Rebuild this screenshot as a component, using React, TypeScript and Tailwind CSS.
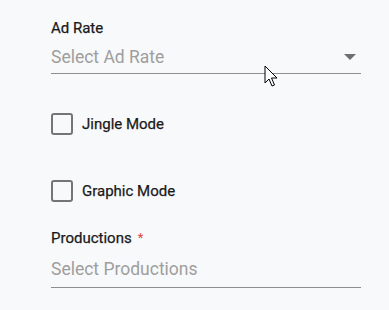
const Checkbox = ({ label }: { label: string }) => (
  <label className="flex items-center">
    <span className="w-[22px] h-[22px] border-2 border-[#757575] rounded-[3px] bg-transparent" />
    <span className="ml-[9px] text-[15px] leading-5 font-normal text-[#1a1a1a] [-webkit-text-stroke:0.25px_#1a1a1a]">{label}</span>
  </label>
);

const App = () => {
  return (
    <div className="relative w-[389px] h-[310px] overflow-hidden bg-[#f8f9fa] font-['Roboto',sans-serif]">
      <div className="w-[361px] pl-[51px] pt-[18px]">
        <div className="text-[15px] leading-5 font-normal text-[#1a1a1a] [-webkit-text-stroke:0.25px_#1a1a1a]">Ad Rate</div>
        <div className="mt-[7px] flex items-center justify-between pb-[4px] border-b border-[#8e8e8e]">
          <span className="text-[17.5px] leading-6 text-[#9e9e9e]">Select Ad Rate</span>
          <span className="mr-[5px] w-0 h-0 border-x-[6px] border-x-transparent border-t-[6px] border-t-[#6f6f6f]" />
        </div>

        <div className="mt-[39px]">
          <Checkbox label="Jingle Mode" />
        </div>
        <div className="mt-[45px]">
          <Checkbox label="Graphic Mode" />
        </div>

        <div className="mt-[26px] flex items-center text-[15px] leading-5 font-normal text-[#1a1a1a] [-webkit-text-stroke:0.25px_#1a1a1a]">
          Productions
          <span className="ml-[6px] text-[13px] text-[#e0443c] [-webkit-text-stroke:0px]">*</span>
        </div>
        <div className="mt-[9px] pb-[5px] border-b border-[#8e8e8e]">
          <span className="text-[17.5px] leading-6 text-[#9e9e9e]">Select Productions</span>
        </div>
      </div>

      {/* mouse pointer */}
      <svg className="absolute left-[264px] top-[65px]" width="14" height="23" viewBox="0 0 14 23">
        <path
          d="M1 1 L1 18 L5 14 L8 21 L10.5 20 L7.5 13 L13 13 Z"
          fill="#fff"
          stroke="#000"
          strokeWidth="1"
          strokeLinejoin="miter"
        />
      </svg>
    </div>
  );
};

export default App;
